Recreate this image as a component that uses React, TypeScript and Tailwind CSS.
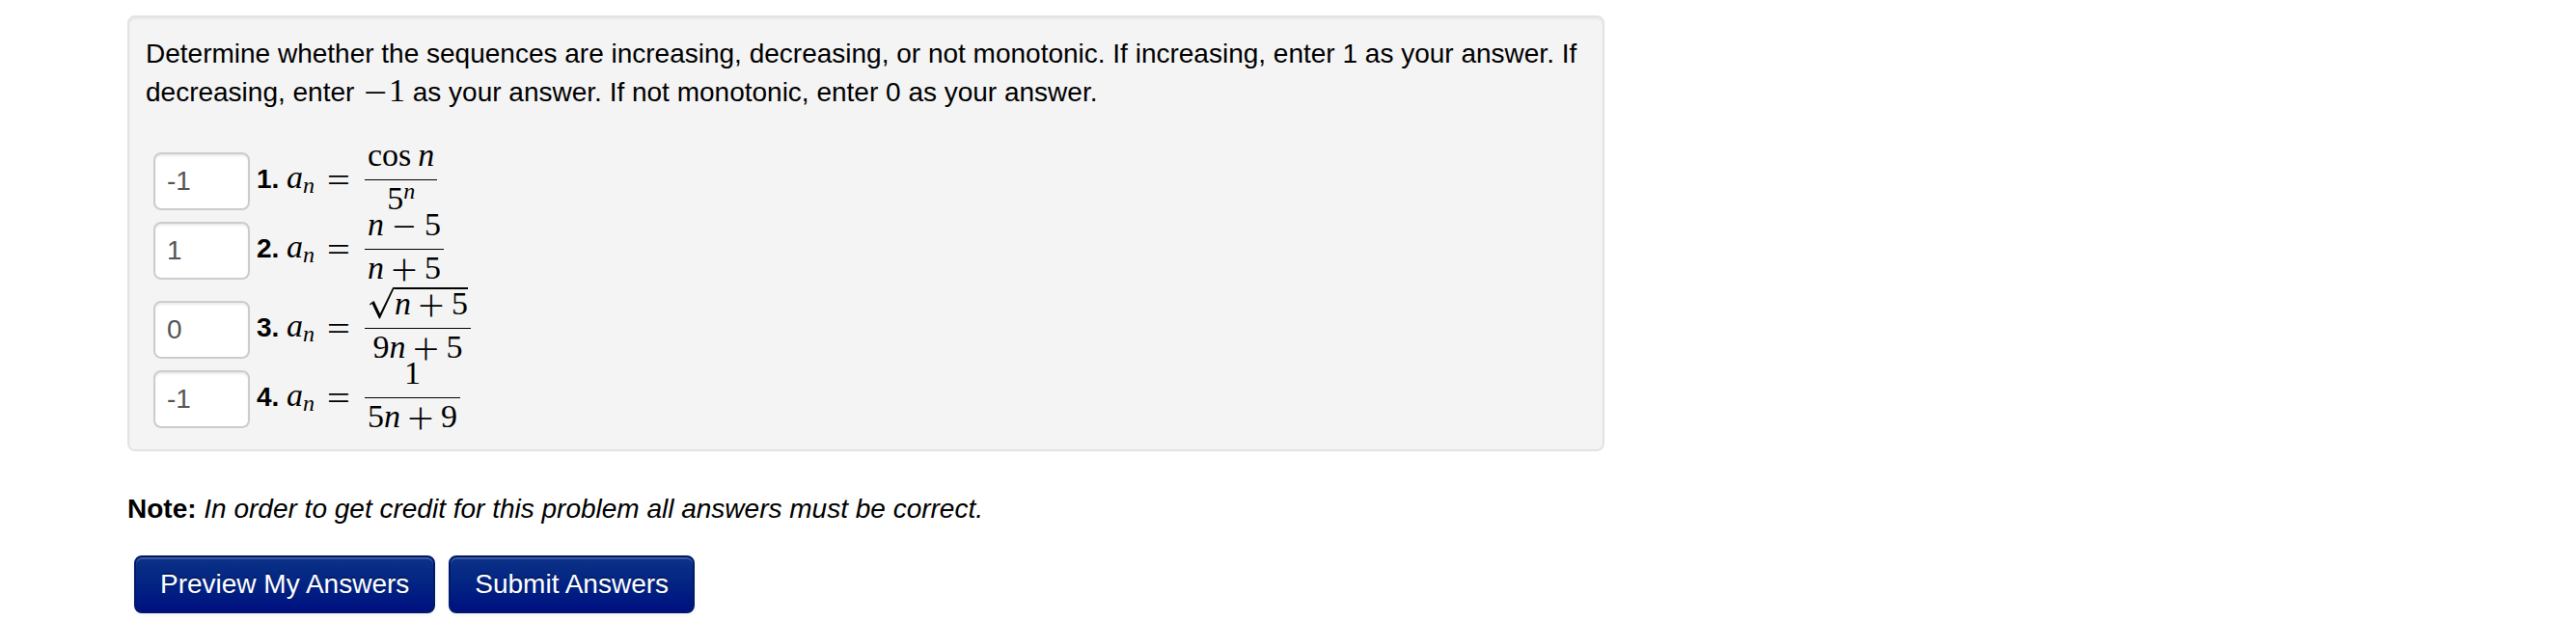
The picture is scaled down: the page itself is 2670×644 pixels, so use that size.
import type { ReactNode } from 'react'

type Sequence = {
  answer: string
  numerator: ReactNode
  denominator: ReactNode
  hasRoot?: boolean
}

const Var = ({ children }: { children: ReactNode }) => <i className="italic">{children}</i>

const Operator = ({ children }: { children: ReactNode }) => (
  <span className="inline-block w-[42px] text-center align-[-7px] font-['Lato'] text-[48px] leading-0 font-light">
    {children}
  </span>
)

const SquareRoot = ({ children }: { children: ReactNode }) => (
  <span className="flex items-start">
    <svg className="h-[34px] w-7" viewBox="0 0 28 34" aria-hidden="true">
      <path d="M2 17.2L6.6 14L12.9 27.2L26.2 0H28V1.8H27.2L12.8 32.4H12L4.6 17L2.5 18.4Z" fill="black" />
    </svg>
    <span className="border-t-2 border-black leading-[30px]">{children}</span>
  </span>
)

const sequences: Sequence[] = [
  {
    answer: '-1',
    numerator: (
      <>
        cos<span className="pl-[7px]"><Var>n</Var></span>
      </>
    ),
    denominator: (
      <>
        5<sup className="top-0 align-[11px] text-[24px] leading-0"><Var>n</Var></sup>
      </>
    )
  },
  {
    answer: '1',
    numerator: <><Var>n</Var><Operator>−</Operator>5</>,
    denominator: <><Var>n</Var><Operator>+</Operator>5</>
  },
  {
    answer: '0',
    numerator: <SquareRoot><Var>n</Var><Operator>+</Operator>5</SquareRoot>,
    denominator: <>9<Var>n</Var><Operator>+</Operator>5</>,
    hasRoot: true
  },
  {
    answer: '-1',
    numerator: '1',
    denominator: <>5<Var>n</Var><Operator>+</Operator>9</>
  }
]

function SequenceRow({ sequence, index }: { sequence: Sequence; index: number }) {
  const id = `answer-${index + 1}`

  return (
    <li className={sequence.hasRoot ? 'pt-[10px]' : ''}>
      <div className="flex h-[72px] items-center">
        <input
          id={id}
          type="text"
          defaultValue={sequence.answer}
          className="mt-[3px] h-[60px] w-[100px] rounded-lg border-2 border-[#ccc] bg-white px-3 text-[28px] text-[#555] shadow-[inset_0_2px_2px_rgba(0,0,0,0.075)] outline-none"
        />
        <label htmlFor={id} className="flex items-baseline pb-[2px] pl-[7px] leading-10">
          <b className="w-[31px]">{index + 1}.</b>
          <span className="font-['Liberation_Serif',serif] text-[34px]">
            <Var>a</Var>
            <sub className="bottom-0 mr-1 align-[-5px] text-[24px] leading-0"><Var>n</Var></sub>
            <Operator>=</Operator>
          </span>
        </label>
        <div className="ml-[6px] flex flex-col items-stretch text-center font-['Liberation_Serif',serif] text-[34px] whitespace-nowrap">
          <div className="flex h-[42px] justify-center px-[3px] leading-[34px]">
            <div>{sequence.numerator}</div>
          </div>
          <div className="h-px bg-black" />
          <div className="h-[42px] px-[3px] leading-[38px]">{sequence.denominator}</div>
        </div>
      </div>
    </li>
  )
}

const buttonClass =
  'h-[60px] rounded-lg border-2 border-[#001a6b] bg-linear-to-b from-[#0d3286] to-[#000e80] px-[25px] text-[28px] text-white shadow-[inset_0_2px_0_rgba(255,255,255,0.2),0_2px_4px_rgba(0,0,0,0.05)] [text-shadow:0_-2px_0_rgba(0,0,0,0.25)]'

export default function App() {
  return (
    <main className="bg-white pt-4 pr-10 pb-2 pl-[132px] font-['Liberation_Sans',Arial,sans-serif] text-[28px] leading-10 text-black">
      <form onSubmit={(event) => event.preventDefault()}>
        <section className="w-full max-w-[1531px] rounded-lg border-2 border-[#e3e3e3] bg-[#f4f4f4] px-[17px] py-[18px] shadow-[inset_0_2px_2px_rgba(0,0,0,0.05)]">
          <p>
            Determine whether the sequences are increasing, decreasing, or not monotonic. If increasing, enter 1 as your
            answer. If decreasing, enter{' '}
            <span className="font-['Liberation_Serif',serif] text-[34px] leading-0">
              <span className="align-[-7px] font-['Lato'] text-[48px] leading-0 font-light">−</span>1
            </span>{' '}
            as your answer. If not monotonic, enter 0 as your answer.
          </p>
          <ol className="mt-[34px] pl-2">
            {sequences.map((sequence, index) => (
              <SequenceRow key={index} sequence={sequence} index={index} />
            ))}
          </ol>
        </section>
        <p className="mt-10">
          <b>Note:</b> <em>In order to get credit for this problem all answers must be correct.</em>
        </p>
        <div className="mt-7 flex gap-[14px] pl-[7px]">
          <button type="button" className={buttonClass}>
            Preview My Answers
          </button>
          <button type="submit" className={buttonClass}>
            Submit Answers
          </button>
        </div>
      </form>
    </main>
  )
}
